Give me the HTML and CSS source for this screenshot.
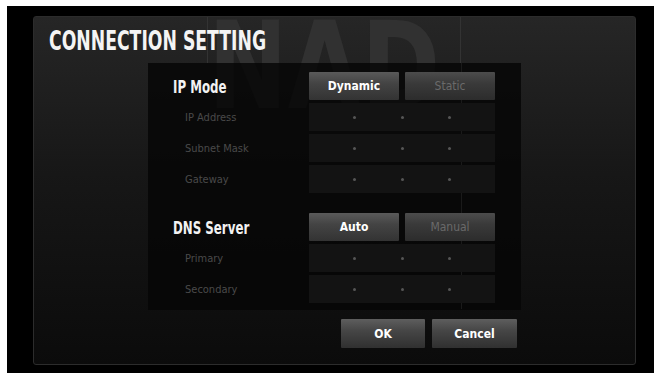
FILE: index.html
```html
<!DOCTYPE html>
<html lang="en">
<head>
    <meta charset="UTF-8">
    <meta name="viewport" content="width=device-width, initial-scale=1.0">
    <title>Connection Setting</title>
    <link rel="stylesheet" href="styles.css">
</head>
<body>
    <div class="screen">
        <div class="panel">
            <div class="watermark" aria-hidden="true">NAD</div>
            <div class="frame-line line-a"></div>
            <div class="frame-line line-b"></div>
            <h1 class="title"><span>CONNECTION SETTING</span></h1>

            <div class="dialog">
                <div class="frame-line line-c"></div>
                <div class="row">
                    <div class="label"><span>IP Mode</span></div>
                    <div class="choices">
                        <button class="btn selected">Dynamic</button>
                        <button class="btn dim">Static</button>
                    </div>
                </div>
                <div class="row field-row">
                    <div class="sublabel">IP Address</div>
                    <div class="field"><span class="seg"></span><span class="dot"></span><span class="seg"></span><span class="dot"></span><span class="seg"></span><span class="dot"></span><span class="seg"></span></div>
                </div>
                <div class="row field-row">
                    <div class="sublabel">Subnet Mask</div>
                    <div class="field"><span class="seg"></span><span class="dot"></span><span class="seg"></span><span class="dot"></span><span class="seg"></span><span class="dot"></span><span class="seg"></span></div>
                </div>
                <div class="row field-row">
                    <div class="sublabel">Gateway</div>
                    <div class="field"><span class="seg"></span><span class="dot"></span><span class="seg"></span><span class="dot"></span><span class="seg"></span><span class="dot"></span><span class="seg"></span></div>
                </div>

                <div class="row section">
                    <div class="label"><span>DNS Server</span></div>
                    <div class="choices">
                        <button class="btn selected">Auto</button>
                        <button class="btn dim">Manual</button>
                    </div>
                </div>
                <div class="row field-row">
                    <div class="sublabel">Primary</div>
                    <div class="field"><span class="seg"></span><span class="dot"></span><span class="seg"></span><span class="dot"></span><span class="seg"></span><span class="dot"></span><span class="seg"></span></div>
                </div>
                <div class="row field-row">
                    <div class="sublabel">Secondary</div>
                    <div class="field"><span class="seg"></span><span class="dot"></span><span class="seg"></span><span class="dot"></span><span class="seg"></span><span class="dot"></span><span class="seg"></span></div>
                </div>
            </div>

            <div class="actions">
                <button class="btn action ok">OK</button>
                <button class="btn action cancel">Cancel</button>
            </div>
        </div>
    </div>
</body>
</html>
```

FILE: styles.css
```css
body {
    margin: 0;
    background: #fff;
    overflow: hidden;
    font-family: "DejaVu Sans Condensed", "DejaVu Sans", sans-serif;
}
.screen {
    margin: 6px 0 0 7px;
    width: 647px;
    height: 367px;
    background: #000;
    padding: 10px 0 0 26px;
    box-sizing: border-box;
    overflow: hidden;
}
.panel {
    position: relative;
    width: 603px;
    height: 349px;
    box-sizing: border-box;
    border: 1px solid #2c2c2c;
    border-radius: 3px;
    background: linear-gradient(#262626, #171717 45%, #0b0b0b);
    padding: 0 0 0 114px;
    overflow: hidden;
}
.watermark {
    position: absolute;
    left: 174px;
    top: -24px;
    font-family: "DejaVu Sans", sans-serif;
    font-weight: bold;
    font-size: 122px;
    color: #313131;
    line-height: 1.2;
    transform: scaleX(0.78);
    transform-origin: left top;
}
.frame-line {
    position: absolute;
    width: 1px;
    background: #333;
}
.line-a { left: 173px; top: 0; height: 46px; }
.line-b { left: 426px; top: 0; height: 46px; }
.line-c { left: 313px; top: 0; height: 246px; background: #1a1a1a; }
.title {
    position: relative;
    margin: 0 0 0 -99px;
    padding-top: 9px;
    height: 37px;
    font-size: 27px;
    font-weight: bold;
    color: #f4f4f4;
    line-height: 30px;
    white-space: nowrap;
}
.title span {
    display: inline-block;
    transform: scaleX(0.71);
    transform-origin: left center;
}
.dialog {
    position: relative;
    width: 373px;
    height: 247px;
    box-sizing: border-box;
    background: rgba(6, 6, 6, 0.84);
    padding: 9px 26px 0 25px;
}
.row {
    position: relative;
    display: flex;
    align-items: center;
    height: 28px;
    margin-bottom: 3px;
}
.row.section {
    margin-top: 20px;
}
.label {
    width: 136px;
    color: #f2f2f2;
    font-weight: bold;
    font-size: 18px;
    white-space: nowrap;
}
.label span {
    display: inline-block;
    transform: scaleX(0.73);
    transform-origin: left center;
}
.sublabel {
    width: 124px;
    padding-left: 12px;
    color: #4a4a4a;
    font-size: 11px;
}
.choices {
    display: flex;
    gap: 6px;
}
.btn {
    width: 90px;
    height: 28px;
    border: none;
    border-radius: 1px;
    background: linear-gradient(#5a5a5a, #444 40%, #333);
    font-family: "DejaVu Sans Condensed", "DejaVu Sans", sans-serif;
    font-weight: bold;
    font-size: 12px;
    padding: 0;
}
.btn.selected {
    color: #fff;
}
.btn.dim {
    color: #6a6a6a;
    font-weight: normal;
    background: linear-gradient(#4c4c4c, #3a3a3a 40%, #2c2c2c);
}
.field {
    display: flex;
    align-items: center;
    width: 186px;
    height: 28px;
    background: #131313;
}
.seg {
    flex: 1;
}
.dot {
    width: 3px;
    height: 3px;
    border-radius: 50%;
    background: #555;
}
.actions {
    display: flex;
    gap: 7px;
    margin: 9px 0 0 193px;
}
.btn.action {
    width: 84px;
    height: 29px;
    color: #fff;
    background: linear-gradient(#5e5e5e, #464646 40%, #303030);
}
.btn.cancel {
    width: 85px;
}
```
